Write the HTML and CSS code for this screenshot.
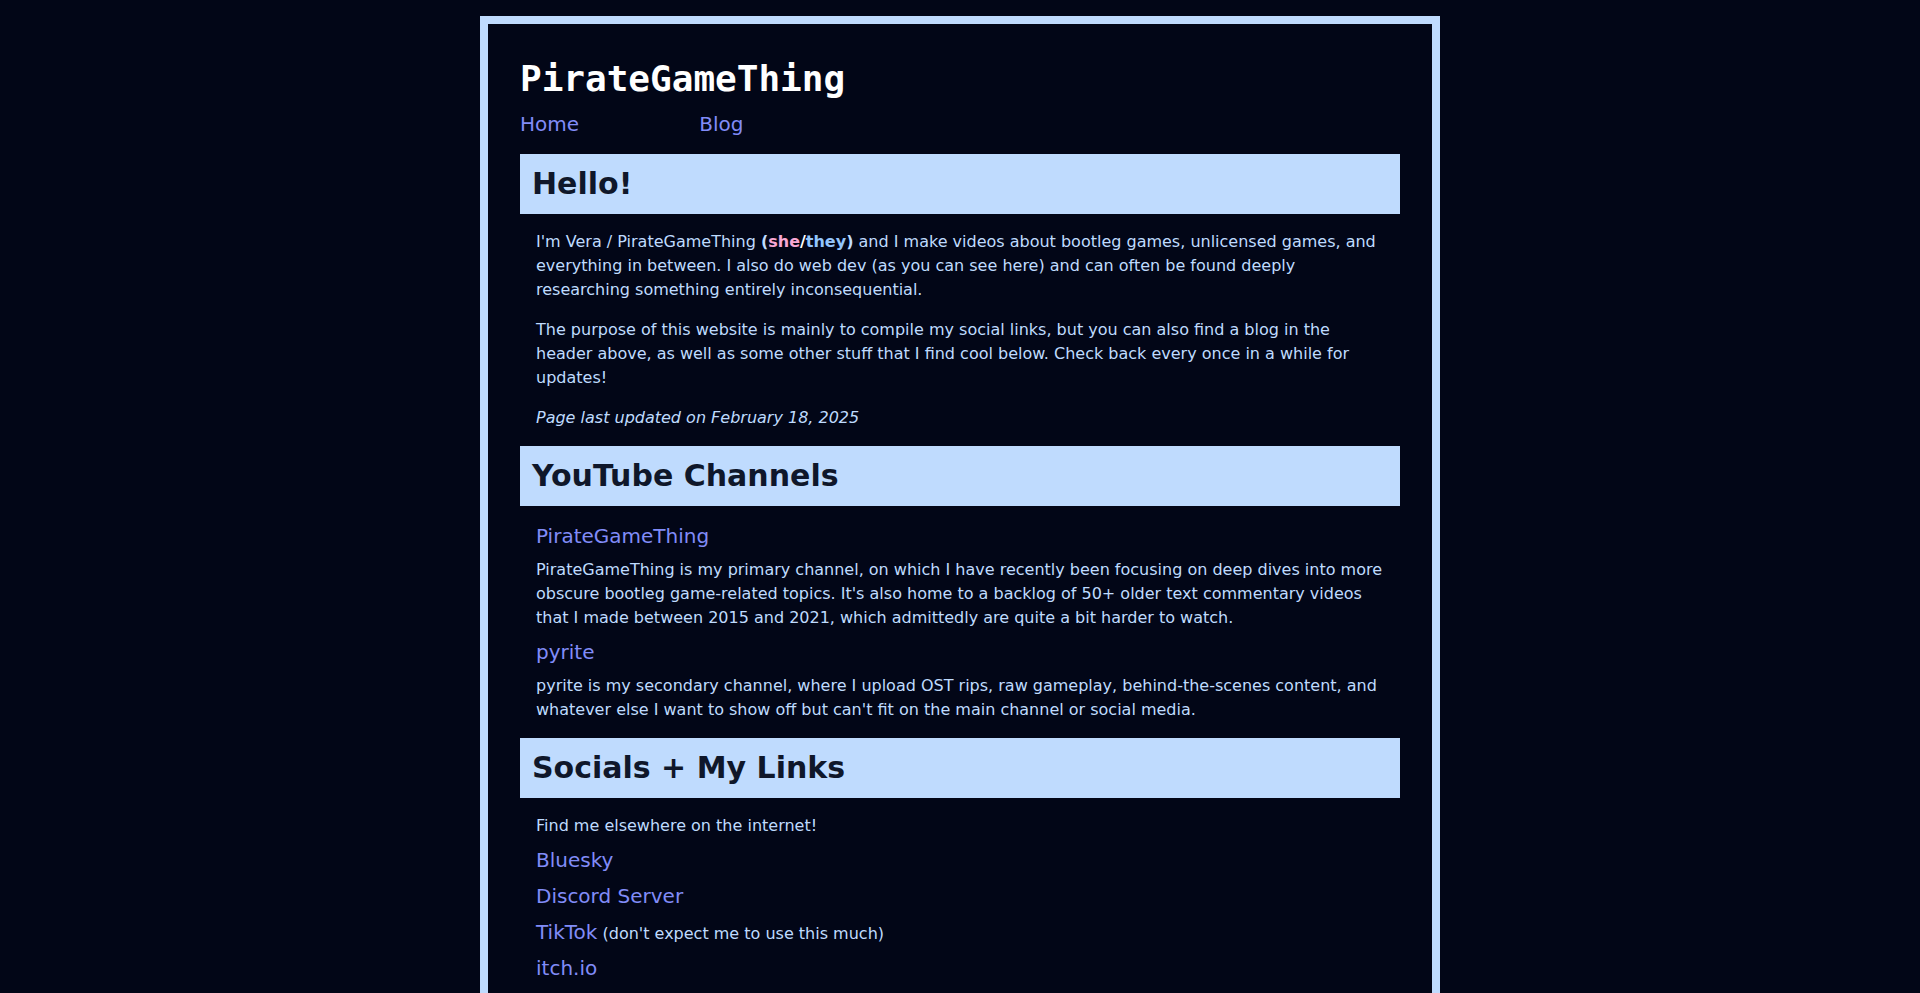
FILE: index.html
```html
<!DOCTYPE html>
<html lang="en">
<head>
  <meta charset="utf-8">
  <meta name="viewport" content="width=device-width, initial-scale=1">
  <title>PirateGameThing</title>
  <link rel="stylesheet" href="styles.css">
</head>
<body>
  <div class="page">
    <header class="site-header">
      <h1 class="wordmark">PirateGameThing</h1>
      <nav class="site-nav">
        <a class="link" href="#home">Home</a>
        <a class="link" href="#blog">Blog</a>
      </nav>
    </header>
    <main>
      <section>
        <h2 class="section-title">Hello!</h2>
        <div class="section-body">
          <p>I'm Vera / PirateGameThing <strong>(<span class="she">she</span><span class="slash">/</span><span class="they">they</span>)</strong> and I make videos about bootleg games, unlicensed games, and everything in between. I also do web dev (as you can see here) and can often be found deeply researching something entirely inconsequential.</p>
          <p>The purpose of this website is mainly to compile my social links, but you can also find a blog in the header above, as well as some other stuff that I find cool below. Check back every once in a while for updates!</p>
          <p><em>Page last updated on February 18, 2025</em></p>
        </div>
      </section>
      <section>
        <h2 class="section-title">YouTube Channels</h2>
        <div class="section-body section-body-list">
          <h3 class="entry"><a class="link" href="#pirategamething">PirateGameThing</a></h3>
          <p>PirateGameThing is my primary channel, on which I have recently been focusing on deep dives into more obscure bootleg game-related topics. It's also home to a backlog of 50+ older text commentary videos that I made between 2015 and 2021, which admittedly are quite a bit harder to watch.</p>
          <h3 class="entry"><a class="link" href="#pyrite">pyrite</a></h3>
          <p>pyrite is my secondary channel, where I upload OST rips, raw gameplay, behind-the-scenes content, and whatever else I want to show off but can't fit on the main channel or social media.</p>
        </div>
      </section>
      <section>
        <h2 class="section-title">Socials + My Links</h2>
        <div class="section-body section-body-list">
          <p>Find me elsewhere on the internet!</p>
          <ul class="links">
            <li><a class="link" href="#bluesky">Bluesky</a></li>
            <li><a class="link" href="#discord">Discord Server</a></li>
            <li><a class="link" href="#tiktok">TikTok</a> (don't expect me to use this much)</li>
            <li><a class="link" href="#itch">itch.io</a></li>
          </ul>
        </div>
      </section>
    </main>
  </div>
</body>
</html>
```
FILE: styles.css
```css
*,
*::before,
*::after {
  box-sizing: border-box;
}

body {
  margin: 0;
  padding-top: 16px;
  background: #020617;
  color: #bfdbfe;
  font-family: "DejaVu Sans", sans-serif;
  font-size: 16px;
  line-height: 24px;
}

h1,
h2,
h3,
p,
ul {
  margin: 0;
  padding: 0;
}

.page {
  max-width: 960px;
  min-height: 100vh;
  margin: 0 auto;
  padding: 32px;
  border: 8px solid #bfdbfe;
}

.site-header {
  display: flex;
  flex-direction: column;
  gap: 8px;
  margin-bottom: 16px;
}

.wordmark {
  color: #ffffff;
  font-family: "DejaVu Sans Mono", monospace;
  font-size: 36px;
  font-weight: 700;
  line-height: 46px;
}

.site-nav {
  display: grid;
  grid-template-columns: repeat(5, 1fr);
  gap: 16px;
}

.link {
  color: #818cf8;
  font-size: 20px;
  line-height: 28px;
  text-decoration: none;
}

.link:hover {
  text-decoration: underline;
}

.section-title {
  padding: 12px;
  background: #bfdbfe;
  color: #0f172a;
  font-size: 30px;
  font-weight: 700;
  line-height: 36px;
}

.section-body {
  display: flex;
  flex-direction: column;
  gap: 16px;
  padding: 16px;
}

.section-body-list,
.links {
  gap: 8px;
}

.entry {
  font-size: 20px;
  font-weight: 400;
  line-height: 28px;
}

.links {
  display: flex;
  flex-direction: column;
  list-style: none;
}

.she {
  color: #f9a8d4;
}

.they {
  color: #93c5fd;
}

.slash {
  color: #ffffff;
}
```
